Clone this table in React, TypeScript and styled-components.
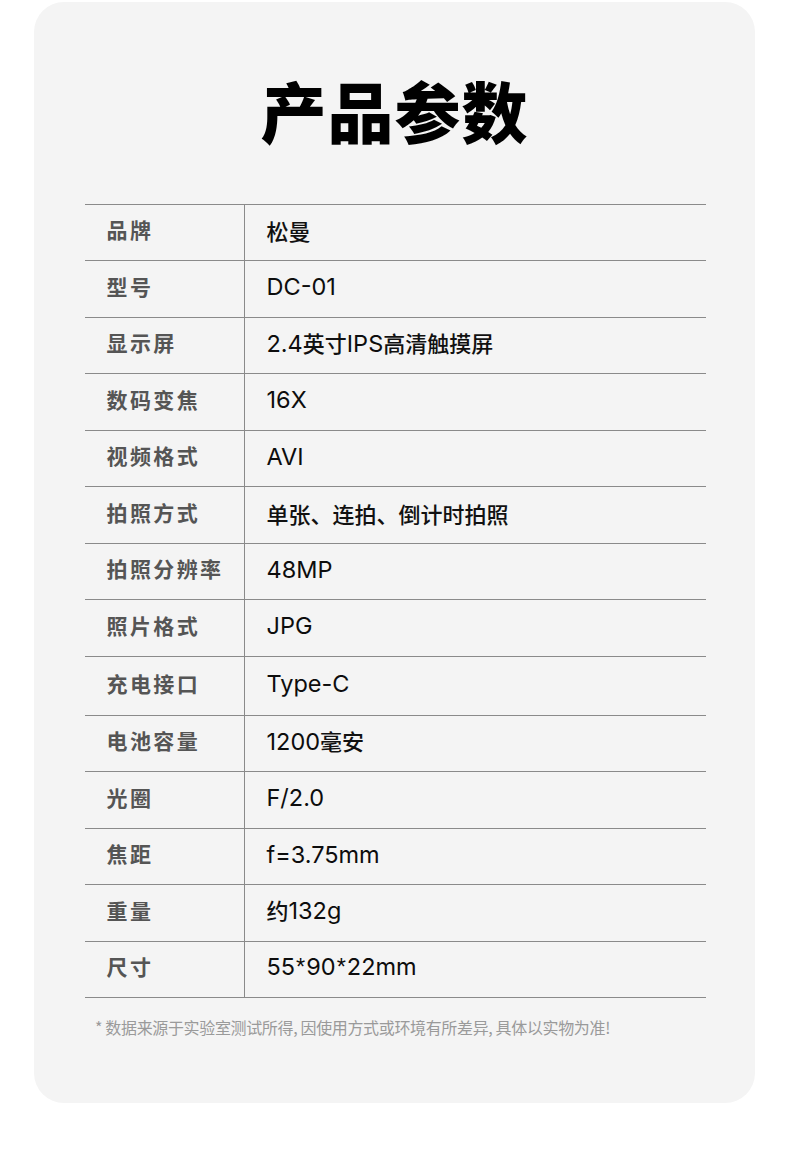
import React from "react";
import styled, { createGlobalStyle } from "styled-components";

const Global = createGlobalStyle`
  html, body { margin: 0; padding: 0; background: #ffffff; }
  body { font-family: "Noto Sans CJK SC", "Noto Sans", sans-serif; }
`;

const Page = styled.div`
  width: 790px;
  height: 1171px;
  box-sizing: border-box;
  padding: 2px 35px 0 34px;
  background: #ffffff;
`;

const Card = styled.div`
  height: 1101px;
  background: #f4f4f4;
  border-radius: 30px;
  display: flex;
  flex-direction: column;
  align-items: center;
  padding-top: 62px;
  box-sizing: border-box;
`;

const Title = styled.h1`
  margin: 0;
  font-size: 66px;
  line-height: 90px;
  font-weight: 900;
  color: #000;
  letter-spacing: 1px;
  font-family: "Noto Sans CJK SC", sans-serif;
`;

const Table = styled.div`
  margin-top: 50px;
  width: 621px;
  margin-left: 1px;
  border-top: 1px solid #8a8a8a;
  display: flex;
  flex-direction: column;
`;

const Row = styled.div<{ $h: number }>`
  display: grid;
  grid-template-columns: 160px 1fr;
  height: ${(p) => p.$h}px;
  border-bottom: 1px solid #8a8a8a;
  box-sizing: border-box;
`;

const Label = styled.div`
  border-right: 1px solid #8a8a8a;
  display: flex;
  align-items: center;
  padding-left: 22px;
  padding-bottom: 6px;
  line-height: 1;
  font-size: 21px;
  letter-spacing: 2.4px;
  font-weight: 700;
  color: #555555;
`;

const Value = styled.div`
  display: flex;
  align-items: center;
  padding-left: 22px;
  padding-bottom: 5px;
  font-size: 22px;
  font-weight: 500;
  color: #111111;
`;

const ValueText = styled.span`
  line-height: 1;
  white-space: pre;
`;

const Latin = styled.span`
  font-family: "Inter", "Liberation Sans", sans-serif;
  font-size: 23.5px;
  font-weight: 400;
  color: #0d0d0d;
`;

const Star = styled.span`
  font-family: "Liberation Sans", sans-serif;
  font-size: 23.5px;
  color: #0d0d0d;
  margin: 0 1px;
`;

const Note = styled.p`
  margin: 17px 0 0 0;
  align-self: flex-start;
  padding-left: 61px;
  font-size: 16px;
  color: #9a9a9a;
  font-family: "Noto Sans CJK SC", sans-serif;
  letter-spacing: -0.35px;
`;

const rows: [string, string, number][] = [
  ["品牌", "松曼", 56],
  ["型号", "DC-01", 57],
  ["显示屏", "2.4英寸IPS高清触摸屏", 56],
  ["数码变焦", "16X", 57],
  ["视频格式", "AVI", 56],
  ["拍照方式", "单张、连拍、倒计时拍照", 57],
  ["拍照分辨率", "48MP", 56],
  ["照片格式", "JPG", 57],
  ["充电接口", "Type-C", 59],
  ["电池容量", "1200毫安", 56],
  ["光圈", "F/2.0", 57],
  ["焦距", "f=3.75mm", 56],
  ["重量", "约132g", 57],
  ["尺寸", "55*90*22mm", 56],
];

function renderValue(v: string) {
  const parts = v.match(/\*|[\x20-\x29\x2b-\x7e]+|[^\x20-\x7e]+/g) || [];
  return parts.map((p, i) => {
    if (p === "*") return <Star key={i}>*</Star>;
    if (/^[\x20-\x7e]+$/.test(p)) return <Latin key={i}>{p}</Latin>;
    return <span key={i}>{p}</span>;
  });
}

export default function App() {
  return (
    <>
      <Global />
      <Page>
        <Card>
          <Title>产品参数</Title>
          <Table>
            {rows.map(([k, v, h]) => (
              <Row key={k} $h={h}>
                <Label>{k}</Label>
                <Value>
                  <ValueText>{renderValue(v)}</ValueText>
                </Value>
              </Row>
            ))}
          </Table>
          <Note>* 数据来源于实验室测试所得, 因使用方式或环境有所差异, 具体以实物为准!</Note>
        </Card>
      </Page>
    </>
  );
}
